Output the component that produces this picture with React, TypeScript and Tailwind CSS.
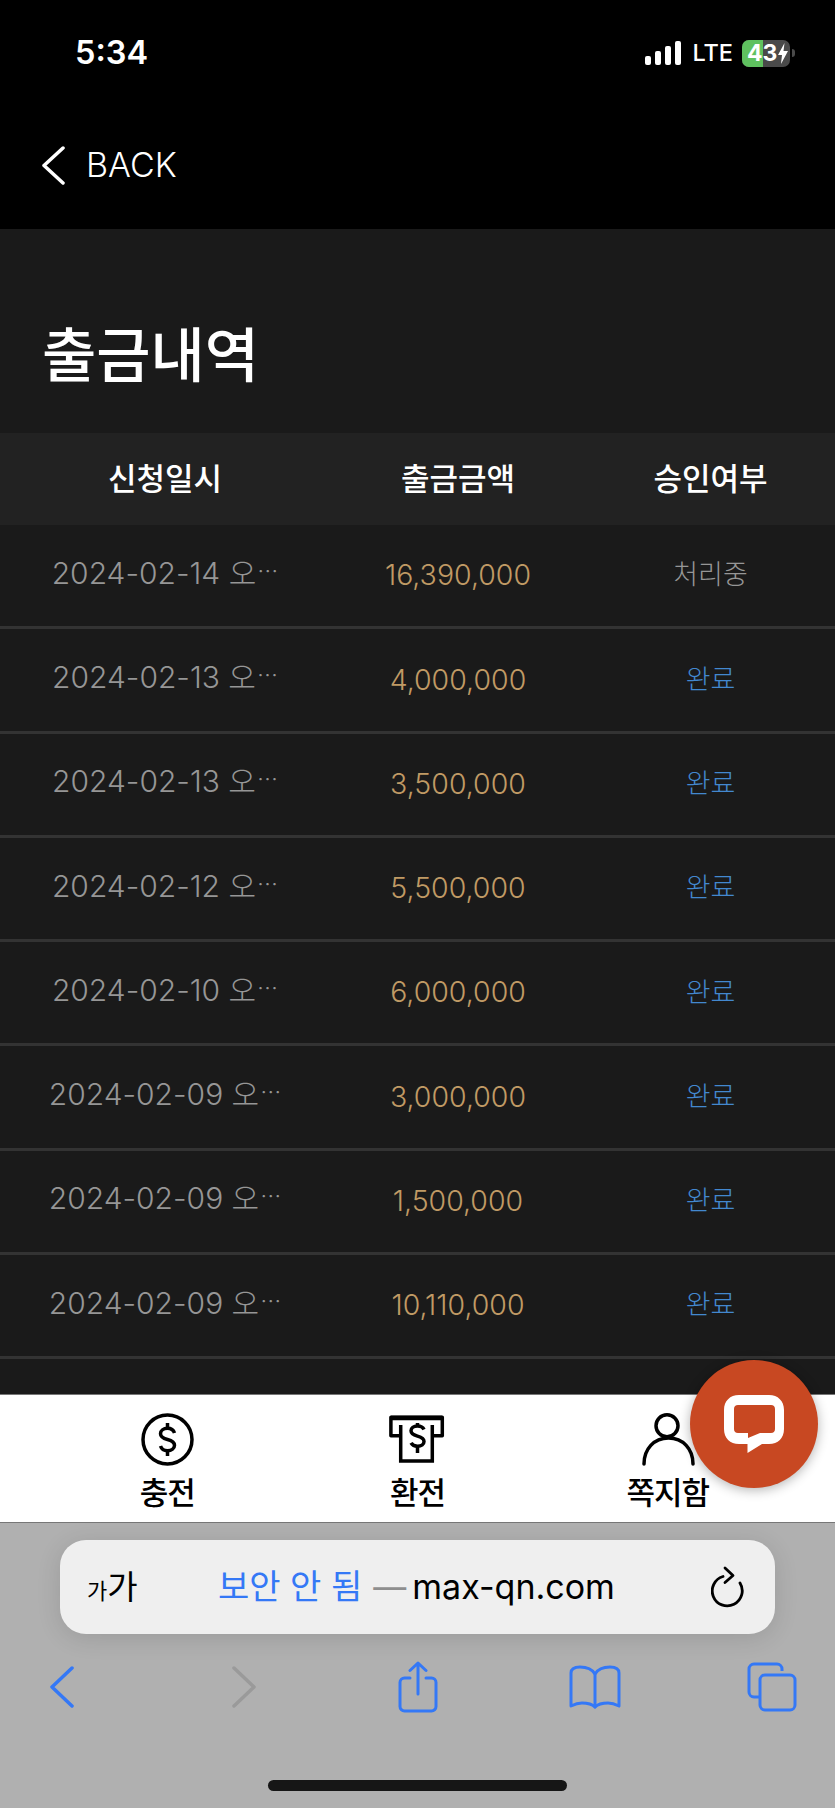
const rows = [
  { date: "2024-02-14 오", amount: "16,390,000", status: "처리중" },
  { date: "2024-02-13 오", amount: "4,000,000", status: "완료" },
  { date: "2024-02-13 오", amount: "3,500,000", status: "완료" },
  { date: "2024-02-12 오", amount: "5,500,000", status: "완료" },
  { date: "2024-02-10 오", amount: "6,000,000", status: "완료" },
  { date: "2024-02-09 오", amount: "3,000,000", status: "완료" },
  { date: "2024-02-09 오", amount: "1,500,000", status: "완료" },
  { date: "2024-02-09 오", amount: "10,110,000", status: "완료" },
];

function DollarIcon() {
  return (
    <svg width="55" height="55" viewBox="0 0 55 55" fill="none" stroke="#000" strokeWidth="3.500">
      <circle cx="27.500" cy="27.500" r="24.500" />
      <path d="M34.500 21c-1-3-3.800-4.700-7-4.700-4 0-7 2.200-7 5.400 0 3.600 3.300 4.800 7 5.800s7 2.200 7 5.800c0 3.200-3 5.400-7 5.400-3.200 0-6-1.700-7-4.700" />
      <path d="M27.500 11v5.500M27.500 38.500V44" />
    </svg>
  );
}

function AtmIcon() {
  return (
    <svg width="56" height="48" viewBox="0 0 56 48" fill="none" stroke="#000" className="mb-[4px]">
      <path d="M11.700 20.700H1.900V2.300h51.400v18.400h-10" strokeWidth="3.500" strokeLinejoin="round" />
      <path d="M2 3h51" strokeWidth="4.500" />
      <path d="M11.700 10v36h31.600V10" strokeWidth="3.500" />
      <path d="M35 14.500c-1-2.200-3.300-3.500-6.500-3.500-4 0-6.500 2-6.500 4.800 0 3.200 3 4.300 6.500 5.300s6.500 2.100 6.500 5.300c0 2.800-2.500 4.800-6.500 4.800-3 0-5.300-1.200-6.500-3.300" strokeWidth="3.500" />
      <path d="M28.500 8v3.500M28.500 31.500V38" strokeWidth="3.500" />
    </svg>
  );
}

function PersonIcon() {
  return (
    <svg width="56" height="58" viewBox="0 0 56 58" fill="none" stroke="#000" strokeWidth="3.500" strokeLinecap="round">
      <circle cx="27" cy="16.700" r="11" />
      <path d="M4 55C4 40 14 29 28.500 29S53 40 53 55" />
    </svg>
  );
}

function ChatIcon() {
  return (
    <svg width="60" height="58" viewBox="0 0 60 58">
      <path
        fillRule="evenodd"
        clipRule="evenodd"
        fill="#fff"
        d="M15 0h30c9 0 15 6 15 15v19c0 9-6 15-15 15h-7L23.500 58v-9H15C6 49 0 43 0 34V15C0 6 6 0 15 0ZM14 10c-2.500 0-4 1.500-4 4v20c0 2.500 1.500 4 4 4h10v5l12-5h11c2.500 0 4-1.500 4-4V14c0-2.500-1.500-4-4-4H14Z"
      />
    </svg>
  );
}

function Chevron({ dir, color, w = 24, h = 42, sw = 3.500 }: { dir: "left" | "right"; color: string; w?: number; h?: number; sw?: number }) {
  const d = dir === "left" ? `M${w - 2} 2L2 ${h / 2}L${w - 2} ${h - 2}` : `M2 2L${w - 2} ${h / 2}L2 ${h - 2}`;
  return (
    <svg width={w} height={h} viewBox={`0 0 ${w} ${h}`} fill="none" stroke={color} strokeWidth={sw} strokeLinecap="round" strokeLinejoin="round">
      <path d={d} />
    </svg>
  );
}

function ShareIcon() {
  return (
    <svg width="40" height="52" viewBox="0 0 40 52" fill="none" stroke="#3478f6" strokeWidth="3" strokeLinecap="round" strokeLinejoin="round">
      <path d="M12 17H6.500A4.500 4.500 0 0 0 2 21.500v24A4.500 4.500 0 0 0 6.500 50h27a4.500 4.500 0 0 0 4.500-4.500v-24a4.500 4.500 0 0 0-4.500-4.500H28" />
      <path d="M20 33V2M12 9.500L20 2l8 7.500" />
    </svg>
  );
}

function BookIcon() {
  return (
    <svg width="52" height="44" viewBox="0 0 52 44" fill="none" stroke="#3478f6" strokeWidth="3" strokeLinecap="round" strokeLinejoin="round">
      <path d="M26 9C23 4 17 2 11 2 7 2 2 3 2 8v33c4-2 7-3 11-3 5 0 10 1 13 4 3-3 8-4 13-4 4 0 7 1 11 3V8c0-5-5-6-9-6-6 0-12 2-15 7Z" />
      <path d="M26 9v33" />
    </svg>
  );
}

function TabsIcon() {
  return (
    <svg width="50" height="50" viewBox="0 0 50 50" fill="none" stroke="#3478f6" strokeWidth="3" strokeLinejoin="round">
      <path d="M35 9V7a5 5 0 0 0-5-5H7a5 5 0 0 0-5 5v23a5 5 0 0 0 5 5h5" />
      <rect x="13" y="13" width="35" height="35" rx="5" />
    </svg>
  );
}

function ReloadIcon() {
  return (
    <svg width="34" height="42" viewBox="0 0 34 42" fill="none" stroke="#000" strokeWidth="2.800" strokeLinecap="round" strokeLinejoin="round">
      <path d="M12 10.500A15 15 0 1 0 29 17" />
      <path d="M14 2l8 7.500-8 7" />
    </svg>
  );
}

function SignalBars() {
  return (
    <div className="mr-[2px] flex items-end gap-[4.300px]">
      <div className="w-[6px] h-[9px] rounded-[2px] bg-white" />
      <div className="w-[6px] h-[14px] rounded-[2px] bg-white" />
      <div className="w-[6px] h-[19px] rounded-[2px] bg-white" />
      <div className="w-[6px] h-[24px] rounded-[2px] bg-white" />
    </div>
  );
}

function Battery() {
  return (
    <div className="flex items-center gap-[2px]">
      <div className="relative w-[48px] h-[27px] rounded-[7px] overflow-hidden bg-[#4a4a4a] flex">
        <div className="w-[21px] h-full bg-[#5fc15f]" />
        <div className="absolute inset-0 flex items-center pl-[5px] text-white text-[23px] font-bold leading-none font-['Inter',sans-serif]">
          43
          <svg width="10" height="21" viewBox="0 0 10 21" className="ml-[1px]">
            <path d="M6.500 0L0 12h4l-1 9 7-13H5.500Z" fill="#fff" />
          </svg>
        </div>
      </div>
      <div className="w-[3px] h-[8px] rounded-r-full bg-[#4a4a4a]" />
    </div>
  );
}

function NavItem({ icon, label }: { icon: React.ReactNode; label: string }) {
  return (
    <div className="flex flex-col items-center">
      <div className="h-[58px] flex items-end justify-center">{icon}</div>
      <span className="mt-[6px] text-[31px] leading-[40px] font-medium text-black tracking-[-1px]">{label}</span>
    </div>
  );
}

export default function App() {
  return (
    <div className="relative w-[835px] h-[1808px] overflow-hidden flex flex-col bg-black font-['Inter','Noto_Sans_CJK_KR',sans-serif]">
      {/* top */}
      <header className="h-[229px] shrink-0 bg-black text-white">
        <div className="h-[107px] pl-[75px] pr-[40px] pt-[32px] flex items-start justify-between">
          <span className="text-[32.500px] leading-[42px] font-semibold">5:34</span>
          <div className="flex items-center gap-[9px] h-[42px]">
            <SignalBars />
            <span className="text-[23.500px] font-medium leading-none">LTE</span>
            <Battery />
          </div>
        </div>
        <div className="pl-[42px] pt-[38px] flex items-center gap-[21px]">
          <Chevron dir="left" color="#fff" w={23} h={39} />
          <span className="text-[34px] leading-[40px] font-light">BACK</span>
        </div>
      </header>

      {/* content */}
      <main className="flex-1 min-h-0 overflow-hidden bg-[#1a1a1a]">
        <div className="h-[204px] pl-[42px] pt-[92px]">
          <h1 className="text-[59px] leading-[70px] font-medium text-white">출금내역</h1>
        </div>
        <div className="h-[92px] grid grid-cols-[330px_256px_249px] items-center bg-[#222222] text-white text-[31px] font-medium text-center">
          <span>신청일시</span>
          <span>출금금액</span>
          <span>승인여부</span>
        </div>
        {rows.map((row, i) => (
          <div key={i} className="h-[104.300px] grid grid-cols-[330px_256px_249px] items-center text-center border-b-[3px] border-[#333333]">
            <div className="pb-[5px] text-[30px] font-light text-[#969696] whitespace-nowrap">
              {row.date}
              <span className="ml-[1px] text-[21px] align-[5px] font-['Noto_Sans_CJK_KR',sans-serif]">⋯</span>
            </div>
            <div className="text-[28.500px] font-light text-[#c09a65]">{row.amount}</div>
            <div className={`text-[27px] font-light ${row.status === "완료" ? "text-[#4388cf]" : "text-[#969696]"}`}>{row.status}</div>
          </div>
        ))}
      </main>

      {/* bottom tabs */}
      <nav className="h-[129px] shrink-0 bg-white border-t border-[#777777] border-b px-[42px] pt-[14px] grid grid-cols-3 items-start">
        <NavItem icon={<DollarIcon />} label="충전" />
        <NavItem icon={<AtmIcon />} label="환전" />
        <NavItem icon={<PersonIcon />} label="쪽지함" />
      </nav>

      {/* safari bar */}
      <footer className="h-[285px] shrink-0 bg-[#b0b0b0] flex flex-col items-center">
        <div className="mt-[17px] w-[715px] h-[94px] rounded-[26px] bg-[#efefef] shadow-[0_4px_24px_rgba(0,0,0,0.12)] flex items-center pl-[27px] pr-[30px]">
          <span className="w-[131px] text-black leading-none flex items-baseline">
            <span className="text-[22px]">가</span>
            <span className="text-[33px]">가</span>
          </span>
          <span className="text-[34px] leading-none text-[#3478f6]">보안 안 됨</span>
          <span className="ml-[11px] text-[33px] leading-none text-[#8e8e8e]">—</span>
          <span className="ml-[6px] text-[34px] leading-none text-black font-['Inter',sans-serif]">max-qn.com</span>
          <span className="ml-auto flex"><ReloadIcon /></span>
        </div>
        <div className="mt-[26px] w-full h-[54px] pl-[50px] flex items-center">
          <Chevron dir="left" color="#3478f6" />
          <span className="ml-[158px] flex"><Chevron dir="right" color="#9a9a9a" /></span>
          <span className="ml-[142px] flex"><ShareIcon /></span>
          <span className="ml-[131px] flex"><BookIcon /></span>
          <span className="ml-[126px] flex"><TabsIcon /></span>
        </div>
        <div className="mt-[66px] w-[299px] h-[11px] rounded-full bg-[#161616]" />
      </footer>

      {/* floating chat button */}
      <button className="absolute left-[690px] top-[1360px] w-[128px] h-[128px] rounded-full bg-[#c84822] shadow-[0_2px_12px_rgba(0,0,0,0.3)] flex items-center justify-center">
        <ChatIcon />
      </button>
    </div>
  );
}
